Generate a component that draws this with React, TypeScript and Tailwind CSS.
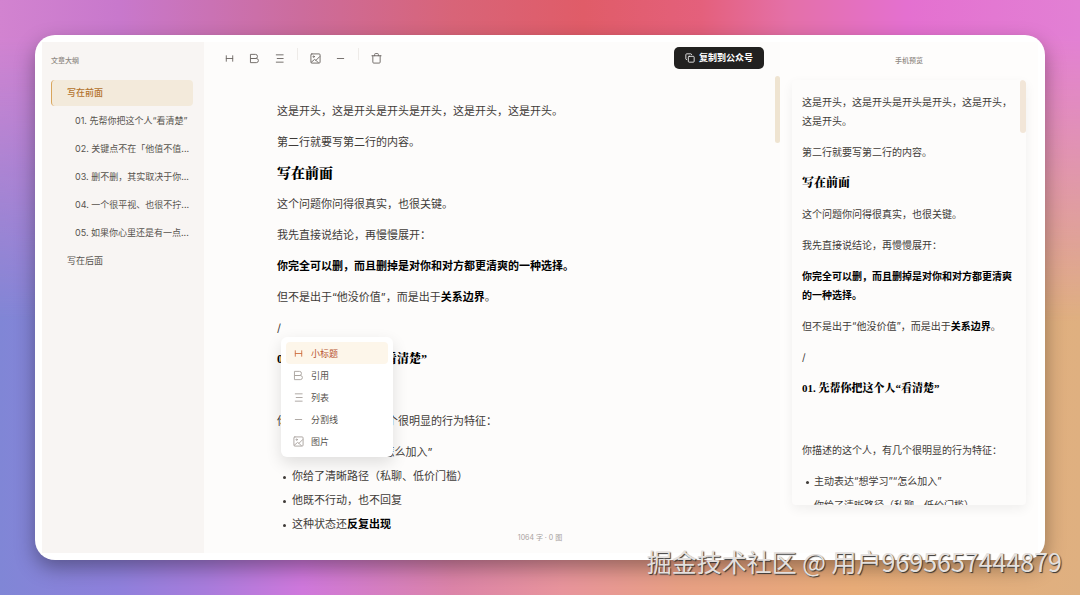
import React from 'react';
import { Copy } from 'lucide-react';

type IconName = 'heading' | 'bold' | 'list' | 'image' | 'minus' | 'trash';

const paths: Record<IconName, React.ReactNode> = {
  heading: <path d="M5 6v12M19 6v12M5 12h14" />,
  bold: <path d="M4 3h10a4.500 4.500 0 0 1 0 9H4zM4 12h12a4.500 4.500 0 0 1 0 9H4z" />,
  list: <path d="M5 4h15M7 12h13M5 20h15" />,
  image: (
    <>
      <rect x="2" y="2" width="20" height="20" rx="2" />
      <circle cx="8" cy="8" r="1.500" />
      <path d="M3 20l7-6 3 2 8-8M13 16l5 5" />
    </>
  ),
  minus: <path d="M5 12h14" />,
  trash: <path d="M2 6h20M4 6v14a2 2 0 0 0 2 2h12a2 2 0 0 0 2-2V6M8 6V3a2 2 0 0 1 2-2h4a2 2 0 0 1 2 2v3" />,
};

const Icon: React.FC<{ name: IconName }> = ({ name }) => (
  <svg className="w-[11px] h-[11px] shrink-0" viewBox="0 0 24 24" fill="none" stroke="currentColor" strokeWidth="2" strokeLinecap="round" strokeLinejoin="round">
    {paths[name]}
  </svg>
);

const outline = [
  '01. 先帮你把这个人“看清楚”',
  '02. 关键点不在「他值不值...',
  '03. 删不删，其实取决于你...',
  '04. 一个很平视、也很不拧...',
  '05. 如果你心里还是有一点...',
];

const menu: { icon: IconName; label: string }[] = [
  { icon: 'heading', label: '小标题' },
  { icon: 'bold', label: '引用' },
  { icon: 'list', label: '列表' },
  { icon: 'minus', label: '分割线' },
  { icon: 'image', label: '图片' },
];

const ToolButton: React.FC<{ name: IconName; label: string }> = ({ name, label }) => (
  <button aria-label={label} className="w-[25px] h-6 flex items-center justify-center text-[#6b6663]">
    <Icon name={name} />
  </button>
);

const SlashMenu: React.FC = () => (
  <div className="absolute left-1 top-[18px] w-[112px] p-[5px] bg-white rounded-md shadow-[0_6px_16px_rgba(0,0,0,0.12)]">
    {menu.map((item, i) => (
      <button
        key={item.label}
        className={
          i === 0
            ? 'w-full h-[22px] px-[7px] flex items-center gap-[7px] rounded-sm bg-[#fdf6ea] text-[#b8532f]'
            : 'w-full h-[22px] px-[7px] flex items-center gap-[7px] rounded-sm text-[#57534e]'
        }
      >
        <span className={i === 0 ? 'text-[#cf7144]' : 'text-[#a8a29e]'}>
          <Icon name={item.icon} />
        </span>
        <span className="text-[9px]">{item.label}</span>
      </button>
    ))}
  </div>
);

// Same article is used by the editor and the phone preview
const Article: React.FC<{ preview?: boolean }> = ({ preview = false }) => {
  const serif = "font-black text-black font-['Liberation_Serif','Noto_Serif_CJK_SC','Noto_Sans_CJK_SC',serif]";
  return (
    <div className={preview ? 'text-[10px] leading-[19px] space-y-3' : 'text-[11px] leading-[19px] space-y-3'}>
      <p>这是开头，这是开头是开头是开头，这是开头，这是开头。</p>
      <p>第二行就要写第二行的内容。</p>
      <h2 className={preview ? `text-[12px] ${serif}` : `text-[14px] ${serif}`}>写在前面</h2>
      <p>这个问题你问得很真实，也很关键。</p>
      <p>我先直接说结论，再慢慢展开：</p>
      <p className="font-bold text-black">你完全可以删，而且删掉是对你和对方都更清爽的一种选择。</p>
      <p>
        但不是出于“他没价值”，而是出于<strong className="text-black">关系边界</strong>。
      </p>
      <div className="relative z-10">
        <p>/</p>
        {!preview && <SlashMenu />}
      </div>
      <h3 className={preview ? `text-[11px] ${serif}` : `text-[12px] ${serif}`}>01. 先帮你把这个人“看清楚”</h3>
      <p className="h-[19px]" />
      <p>你描述的这个人，有几个很明显的行为特征：</p>
      <ul
        className={
          preview
            ? "pl-1 space-y-[5px] [&>li]:before:content-[''] [&>li]:before:inline-block [&>li]:before:align-middle [&>li]:before:size-[3px] [&>li]:before:mr-[5px] [&>li]:before:rounded-full [&>li]:before:bg-current"
            : "pl-1.5 space-y-[5px] [&>li]:before:content-[''] [&>li]:before:inline-block [&>li]:before:align-middle [&>li]:before:size-[3px] [&>li]:before:mr-1.5 [&>li]:before:rounded-full [&>li]:before:bg-current"
        }
      >
        <li>主动表达“想学习”“怎么加入”</li>
        <li>你给了清晰路径（私聊、低价门槛）</li>
        {!preview && (
          <>
            <li>他既不行动，也不回复</li>
            <li>
              这种状态还<strong className="text-black">反复出现</strong>
            </li>
          </>
        )}
      </ul>
    </div>
  );
};

const App: React.FC = () => {
  return (
    <div
      lang="zh-CN"
      className="relative h-screen p-[35px] overflow-hidden font-['Inter','Noto_Sans_CJK_SC',sans-serif] text-[#3f3b38] bg-[linear-gradient(to_right,#8086d6_0%,#8f80dc_11%,#a87cdc_19%,#cf78dc_28%,#dc84a8_42%,#e8949c_52%,#e8a084_63%,#e8ac78_79%,#dfb080_100%)]"
    >
      {/* Warm glow along the top, fading into the base gradient */}
      <div className="absolute inset-0 bg-[linear-gradient(to_right,#d283d0_0%,#c878cc_11%,#cc6c9c_28%,#d86478_42%,#e05c68_54%,#e4607c_65%,#e470a8_73%,#e470d0_84%,#e280d4_100%)] [mask-image:linear-gradient(to_bottom,black_6%,transparent_54%)]" />

      <div className="relative h-full p-[7px] flex bg-white rounded-[20px] shadow-[0_8px_20px_rgba(0,0,0,0.35)]">
        {/* Outline */}
        <aside className="w-[162px] shrink-0 bg-[#f8f5f3] pl-[9px] pr-[11px] pt-3">
          <h2 className="text-[7px] leading-[13px] font-medium text-[#8f8984]">文章大纲</h2>
          <nav className="mt-[13px] flex flex-col gap-[2px] text-[9px] leading-[26px] whitespace-nowrap">
            <a href="#s0" className="pl-[15px] rounded-sm border-l border-[#d9a55c] bg-[#f3eadb] font-medium text-[#b4722c]">写在前面</a>
            {outline.map((title) => (
              <a key={title} href="#s1" className="pl-6 text-[#57534e]">{title}</a>
            ))}
            <a href="#s6" className="pl-4 text-[#57534e]">写在后面</a>
          </nav>
        </aside>

        {/* Editor */}
        <main className="relative flex-1 min-w-0 flex flex-col bg-[#fdfcfb]">
          <div className="pl-[13px] pr-4 pt-1 flex items-center">
            <ToolButton name="heading" label="小标题" />
            <ToolButton name="bold" label="引用" />
            <ToolButton name="list" label="列表" />
            <span className="w-px h-3 mx-[5px] mb-2 bg-[#eeebe8]" />
            <ToolButton name="image" label="图片" />
            <ToolButton name="minus" label="分割线" />
            <span className="w-px h-3 mx-[5px] mb-2 bg-[#eeebe8]" />
            <ToolButton name="trash" label="清空" />
            <button className="ml-auto h-[22px] px-[11px] flex items-center gap-1 rounded-[5px] bg-[#222120] text-white text-[9px] font-bold">
              <Copy className="w-[10px] h-[10px]" />
              复制到公众号
            </button>
          </div>
          <div className="flex-1 min-h-0 mt-1.5 flex overflow-hidden">
            <div className="flex-1 pl-[73px] pt-[26px]">
              <Article />
            </div>
            <div className="w-[5px] h-[67px] rounded-full bg-[#efe4d1]" />
          </div>
          <p className="absolute bottom-[9px] inset-x-0 pl-24 text-center text-[7px] leading-3 text-[#a8a29e]">1064 字 · 0 图</p>
        </main>

        {/* Phone preview */}
        <aside className="w-[258px] shrink-0 px-3 pt-3 flex flex-col bg-[#fefdfc]">
          <h2 className="text-[7px] leading-[13px] text-center font-medium text-[#8f8984]">手机预览</h2>
          <div className="mt-[13px] mb-12 flex-1 min-h-0 flex overflow-hidden bg-[#fdfcfb] rounded-[4px] shadow-[0_4px_12px_rgba(0,0,0,0.06)]">
            <div className="flex-1 min-w-0 pl-[10px] pt-[13px]">
              <Article preview />
            </div>
            <div className="w-[6px] h-[53px] rounded-full bg-[#f2e6d8]" />
          </div>
        </aside>
      </div>

      <p className="absolute right-[18px] bottom-[18px] text-[25px] leading-8 whitespace-nowrap text-[#e4e0de] [text-shadow:1px_1px_1px_#333] font-['Noto_Sans_CJK_SC',sans-serif]">
        掘金技术社区 @ 用户9695657444879
      </p>
    </div>
  );
};

export default App;
